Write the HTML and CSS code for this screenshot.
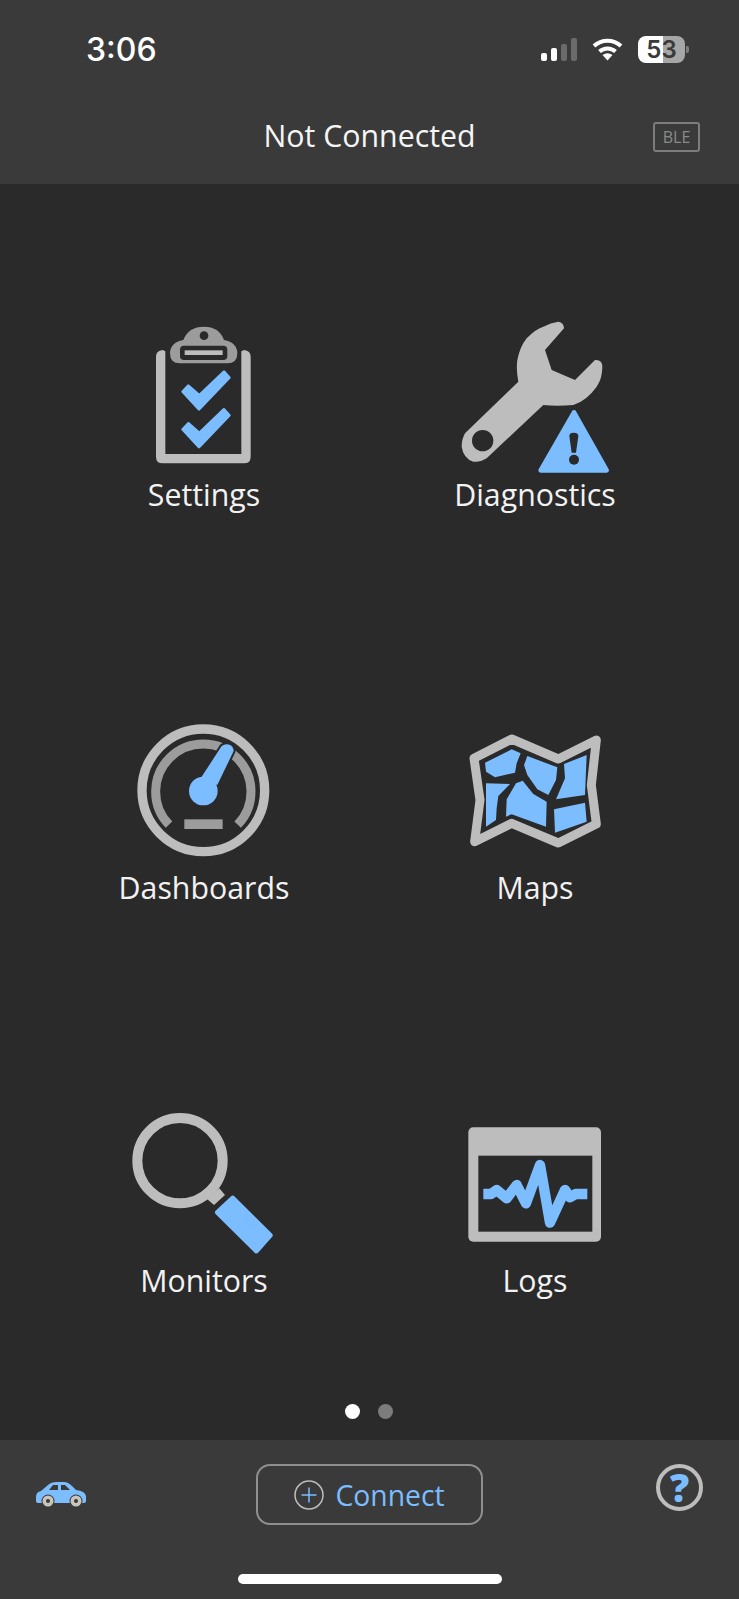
FILE: index.html
```html
<!DOCTYPE html>
<html lang="en">
  <head>
    <meta charset="UTF-8" />
    <meta name="viewport" content="width=device-width, initial-scale=1.0" />
    <title>Not Connected</title>
    <link rel="stylesheet" href="styles.css">
  </head>
  <body>
    <div class="screen">
      <header class="header">
        <div class="status">
          <span class="time">3:06</span>
          <div class="status-icons">
            <svg class="signal" viewBox="0 0 36 23">
              <rect x="0" y="15" width="6" height="8" rx="2" fill="#fff" />
              <rect x="10" y="10" width="6" height="13" rx="2" fill="#fff" />
              <rect x="20" y="6" width="6" height="17" rx="2" fill="#6b6b6b" />
              <rect x="30" y="0" width="6" height="23" rx="2" fill="#6b6b6b" />
            </svg>
            <svg class="wifi" viewBox="0 0 31 24">
              <path d="M2 9A20 20 0 0 1 29 9" fill="none" stroke="#fff" stroke-width="4" />
              <path d="M7.5 14.5A12 12 0 0 1 23.5 14.5" fill="none" stroke="#fff" stroke-width="4" />
              <path d="M10.5 18Q15.5 14.5 20.5 18L15.5 23.5Z" fill="#fff" />
            </svg>
            <div class="battery">53</div>
            <span class="battery-nub"></span>
          </div>
        </div>
        <div class="title-row">
          <span></span>
          <h1 class="title">Not Connected</h1>
          <span class="ble">BLE</span>
        </div>
      </header>

      <main class="main">
        <div class="menu">
          <a class="menu-item">
            <svg class="menu-icon" viewBox="12 15 480 480">
              <path d="M108 140Q108 122 128 120L136 124V432H364V124L372 120Q392 122 392 140V440Q392 460 372 460H128Q108 460 108 440Z" fill="#bdbdbd" />
              <path d="M150 130Q150 98 190 90Q205 50 252 50Q298 50 312 90Q352 98 352 130Q352 160 322 160H180Q150 160 150 130Z" fill="#9c9c9c" />
              <circle cx="252" cy="77" r="13" fill="#2a2a2a" />
              <rect x="180" y="107" width="142" height="43" rx="12" fill="#2a2a2a" />
              <rect x="194" y="121" width="114" height="14" fill="#bdbdbd" />
              <path class="check" d="M188 245L205 227L238 256L312 185L328 203L237 298Z" />
              <path class="check" d="M188 358L205 340L238 369L312 298L328 316L237 411Z" />
            </svg>
            <span class="menu-label">Settings</span>
          </a>
          <a class="menu-item">
            <svg class="menu-icon" viewBox="45 15 480 480">
              <path d="M355 35Q372 38 372 55L315 120L335 180L405 210L465 150Q487 148 487 170Q487 205 470 230Q440 272 400 285Q350 290 310 285L140 445Q118 458 100 455Q70 445 65 410Q65 388 75 370L235 215Q228 180 232 150Q240 110 260 85Q285 58 310 50Q332 38 355 35Z" fill="#bdbdbd" />
              <circle cx="128" cy="392" r="32" fill="#2a2a2a" />
              <path class="blue" d="M402 307L500 481H302Z" stroke="#7cbdff" stroke-width="14" stroke-linejoin="round" />
              <path d="M388 378Q388 368 401 368Q415 368 415 378L408 428H395Z" fill="#2a2a2a" />
              <circle cx="402" cy="449" r="15" fill="#2a2a2a" />
            </svg>
            <span class="menu-label">Diagnostics</span>
          </a>
          <a class="menu-item">
            <svg class="menu-icon" viewBox="12 -6 480 480">
              <circle cx="250" cy="241" r="184" fill="none" stroke="#bdbdbd" stroke-width="28" />
              <path d="M147 344A143 143 0 1 1 353 344" fill="none" stroke="#9c9c9c" stroke-width="27" />
              <rect x="193" y="328" width="115" height="29" fill="#9c9c9c" />
              <path class="blue" d="M305 108Q318 98 332 106Q344 114 340 125L292 225L242 205Z" stroke="#2a2a2a" stroke-width="12" paint-order="stroke" />
              <circle class="blue" cx="250" cy="243" r="43" />
            </svg>
            <span class="menu-label">Dashboards</span>
          </a>
          <a class="menu-item">
            <svg class="menu-icon" viewBox="15 -36 480 480">
              <path d="M72 115L185 57L325 117L439 60L424 195L439 312L325 369L185 310L74 365L90 240Z" fill="#2a2a2a" stroke="#bdbdbd" stroke-width="27" stroke-linejoin="round" />
              <g class="blue">
                <path d="M105 128L185 88L212 100L200 130L195 158L135 172L108 155Z" />
                <path d="M232 108L322 142L318 180L295 225L262 208L232 165L222 135Z" />
                <path d="M410 105L405 225L318 238L345 175L342 132Z" />
                <path d="M108 190L180 192L145 228L140 265L138 300L108 320Z" />
                <path d="M198 190L218 182L250 222L290 245L288 320L185 283L168 290L170 238Z" />
                <path d="M312 268L405 248L410 305L315 338Z" />
              </g>
            </svg>
            <span class="menu-label">Maps</span>
          </a>
          <a class="menu-item">
            <svg class="menu-icon" viewBox="12 3 480 480">
              <circle cx="180" cy="182" r="128" fill="none" stroke="#bdbdbd" stroke-width="30" />
              <path d="M262 298L298 265L315 285L282 315Z" fill="#bdbdbd" />
              <path class="blue" d="M338 295L450 406L409 452L293 337Z" stroke="#7cbdff" stroke-width="16" stroke-linejoin="round" />
            </svg>
            <span class="menu-label">Monitors</span>
          </a>
          <a class="menu-item">
            <svg class="menu-icon" viewBox="0 -27 480 480">
              <rect x="40" y="52" width="398" height="343" rx="15" fill="#bdbdbd" />
              <rect x="70" y="137" width="342" height="228" fill="#2a2a2a" />
              <path d="M85 252H108L125 240L155 265L185 225L213 280L255 165L285 338L330 240L345 262L362 252H397" fill="none" stroke="#7cbdff" stroke-width="31" stroke-linejoin="round" />
            </svg>
            <span class="menu-label">Logs</span>
          </a>
        </div>
        <div class="dots">
          <span class="dot dot-active"></span>
          <span class="dot"></span>
        </div>
      </main>

      <footer class="footer">
        <div class="footer-row">
          <svg class="car" viewBox="0 0 52 26">
            <path class="blue" d="M1 15Q1 10 6 9L13 3Q16 0 22 0H29Q33 0 37 4L41 8Q50 9 51 14V19Q51 21 48 21H4Q1 21 1 19Z" />
            <path d="M14 8L18 3H23V8Z" fill="#3a3a3a" />
            <path d="M26 3H30L35 8H26Z" fill="#3a3a3a" />
            <circle cx="13" cy="19" r="6.5" fill="#3a3a3a" />
            <circle cx="41" cy="19" r="6.5" fill="#3a3a3a" />
            <circle cx="13" cy="19" r="5.5" fill="#c9c5bd" />
            <circle cx="41" cy="19" r="5.5" fill="#c9c5bd" />
            <circle cx="13" cy="19" r="2" fill="#3a3a3a" />
            <circle cx="41" cy="19" r="2" fill="#3a3a3a" />
          </svg>
          <button class="connect" type="button">
            <span class="connect-plus">
              <svg viewBox="0 0 30 30">
                <circle cx="15" cy="15" r="14" fill="none" stroke="#bdbdbd" stroke-width="1.5" />
                <path d="M15 7.5V22.5M7.5 15H22.5" stroke="#7cbdff" stroke-width="1.5" />
              </svg>
            </span>
            Connect
          </button>
          <div class="help">?</div>
        </div>
        <div class="home-bar"></div>
      </footer>
    </div>
  </body>
</html>
```

FILE: styles.css
```css
* {
  margin: 0;
  padding: 0;
  box-sizing: border-box;
}

body {
  background-color: #2a2a2a;
  font-family: "Open Sans", sans-serif;
  color: #f2f2f2;
}

.screen {
  width: 739px;
  height: 1599px;
  display: flex;
  flex-direction: column;
  overflow: hidden;
}

.blue {
  fill: #7cbdff;
}

.header {
  height: 184px;
  background-color: #3a3a3a;
}

.status {
  height: 98px;
  display: flex;
  justify-content: space-between;
  align-items: center;
  padding: 0 50px 0 86px;
}

.time {
  font-family: Inter, sans-serif;
  font-size: 32px;
  font-weight: 500;
  color: #fff;
}

.status-icons {
  display: flex;
  align-items: center;
}

.signal {
  width: 36px;
  height: 23px;
  margin-right: 15px;
}

.wifi {
  width: 31px;
  height: 24px;
  margin-right: 15px;
}

.battery {
  width: 47px;
  height: 27px;
  border-radius: 8px;
  background: linear-gradient(90deg, #fff 53%, #a6a6a6 53%);
  color: #3a3a3a;
  font-family: Inter, sans-serif;
  font-size: 24px;
  font-weight: 600;
  line-height: 27px;
  text-align: center;
}

.battery-nub {
  width: 3px;
  height: 7px;
  margin-left: 1px;
  border-radius: 0 2px 2px 0;
  background-color: #7c7c7c;
}

.title-row {
  height: 74px;
  display: grid;
  grid-template-columns: 1fr auto 1fr;
  align-items: center;
  padding: 0 39px;
}

.title {
  font-size: 30.3px;
  font-weight: 400;
  color: #f5f5f5;
}

.ble {
  justify-self: end;
  width: 47px;
  height: 30px;
  margin-top: 4px;
  border: 2px solid #7c7c7c;
  border-radius: 3px;
  color: #8a8a8a;
  font-size: 16px;
  line-height: 26px;
  text-align: center;
}

.main {
  flex: 1;
  display: flex;
  flex-direction: column;
  padding: 131px 0 21px;
}

.menu {
  display: grid;
  grid-template-columns: repeat(2, 331px);
  grid-auto-rows: 200px;
  row-gap: 193px;
  justify-content: center;
}

.menu-item {
  display: flex;
  flex-direction: column;
  align-items: center;
}

.menu-icon {
  width: 160px;
  height: 160px;
}

.menu-label {
  font-size: 30.3px;
  line-height: 40px;
  white-space: nowrap;
}

.check {
  fill: #7cbdff;
  stroke: #7cbdff;
  stroke-width: 8;
  stroke-linejoin: round;
}

.dots {
  margin-top: auto;
  padding-right: 2px;
  display: flex;
  justify-content: center;
  gap: 18px;
}

.dot {
  width: 15px;
  height: 15px;
  border-radius: 50%;
  background-color: #7c7c7c;
}

.dot-active {
  background-color: #fff;
}

.footer {
  height: 159px;
  padding-top: 24px;
  background-color: #3a3a3a;
}

.footer-row {
  display: grid;
  grid-template-columns: 1fr auto 1fr;
  align-items: start;
  padding: 0 36px;
}

.car {
  width: 52px;
  height: 26px;
  margin: 18px 0 0 -1px;
}

.connect {
  width: 227px;
  height: 61px;
  display: flex;
  align-items: center;
  justify-content: center;
  gap: 11px;
  border: 2px solid #8f8f8f;
  border-radius: 14px;
  background: none;
  color: #7cbdff;
  font-family: "Open Sans", sans-serif;
  font-size: 28.3px;
}

.connect-plus {
  display: flex;
}

.connect-plus svg {
  width: 30px;
  height: 30px;
}

.help {
  justify-self: end;
  width: 47px;
  height: 47px;
  border: 4px solid #bdbdbd;
  border-radius: 50%;
  color: #7cbdff;
  font-size: 38px;
  font-weight: 800;
  line-height: 38px;
  text-align: center;
}

.home-bar {
  width: 264px;
  height: 10px;
  margin: 49px auto 0;
  border-radius: 5px;
  background-color: #fff;
}
```
